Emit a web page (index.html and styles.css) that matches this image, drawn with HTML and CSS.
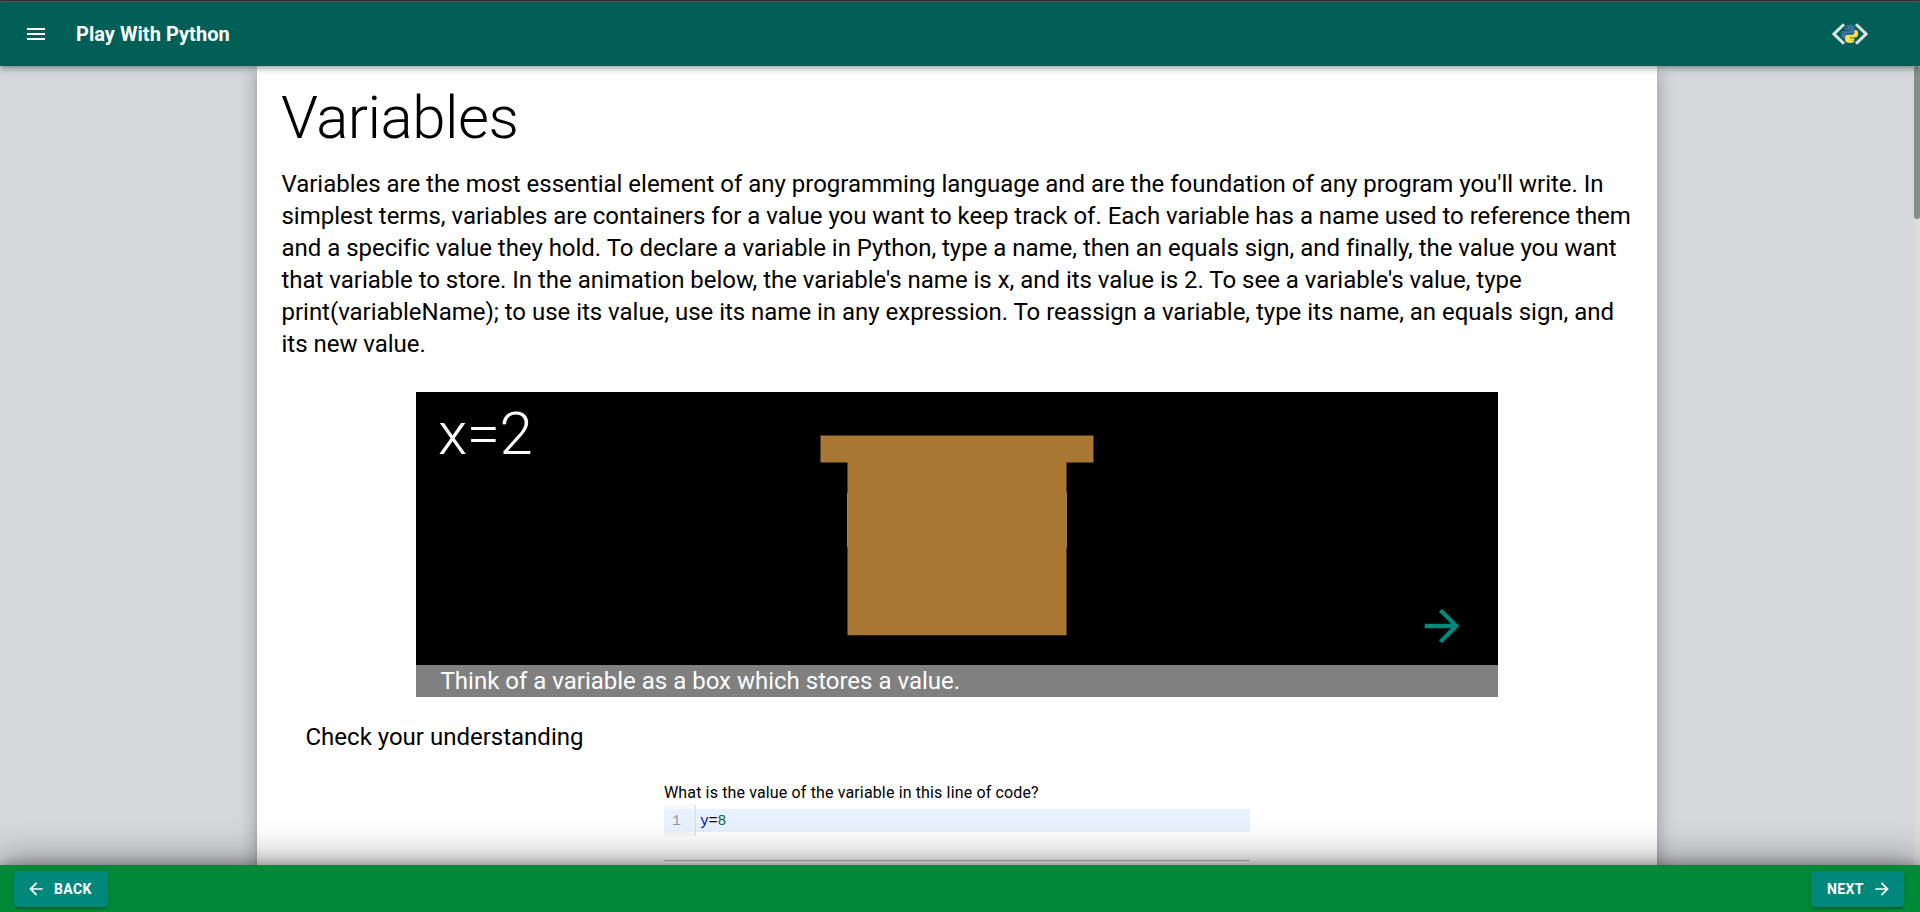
FILE: index.html
```html
<!DOCTYPE html>
<html lang="en">
<head>
<meta charset="utf-8">
<title>Play With Python</title>
<link rel="stylesheet" href="styles.css">
</head>
<body>
<div class="app">
  <header class="app-bar">
    <button class="menu" aria-label="Menu"><svg width="24" height="24" viewBox="0 0 24 24"><path fill="currentColor" d="M3 18h18v-2H3v2zm0-5h18v-2H3v2zm0-7v2h18V6H3z"/></svg></button>
    <span class="brand">Play With Python</span>
    <svg class="logo" width="36" height="22" viewBox="0 0 36 22">
      <path d="M12 1.2 2 11l10 9.800M24 1.200 34 11l-10 9.800" fill="none" stroke="#e2e2e2" stroke-width="3"/>
      <path fill="#3772a4" d="M17.500 2c-3.300 0-4.200 1.200-4.200 3v2h5v.8h-6.500c-2 0-2.800 1.700-2.800 3.700s.9 4 2.800 4h1.500v-2.300c0-1.700 1.300-2.700 2.900-2.700h4.200c1.400 0 2.400-.9 2.400-2.300V5c0-2-2-3-5.300-3z"/>
      <path fill="#ffdc4a" d="M18.100 20c3.300 0 4.200-1.200 4.200-3v-1.800h-4.500v-.8h5.700c1.800 0 2.700-1.700 2.700-3.700s-.8-3.700-2.600-3.700h-1.100v2.200c0 1.600-1.300 2.500-2.800 2.500h-4.200c-1.400 0-2.400.9-2.400 2.300V17c0 2 2 3 5 3z"/>
      <circle cx="15.500" cy="4.500" r=".8" fill="#005f56"/><circle cx="20" cy="17.300" r=".8" fill="#8d9a40"/>
    </svg>
  </header>
  <main class="content">
    <article class="paper">
      <h1 class="title">Variables</h1>
      <p class="text">Variables are the most essential element of any programming language and are the foundation of any program you'll write. In simplest terms, variables are containers for a value you want to keep track of. Each variable has a name used to reference them and a specific value they hold. To declare a variable in Python, type a name, then an equals sign, and finally, the value you want that variable to store. In the animation below, the variable's name is x, and its value is 2. To see a variable's value, type print(variableName); to use its value, use its name in any expression. To reassign a variable, type its name, an equals sign, and its new value.</p>
      <section class="animation">
        <div class="stage">
          <div class="code">x=2</div>
          <svg class="box" width="274" height="201" viewBox="0 0 274 201"><path fill="#a87734" d="M.5.500h273v27h-27v172.700H27.500V27.500H.5z"/><path fill="#a88550" d="M27 58h1v54h-1zM246 58h1v54h-1z"/></svg>
          <svg class="forward" width="52" height="52" viewBox="0 0 24 24"><path fill="#00897b" d="m12 4-1.410 1.410L16.170 11H4v2h12.170l-5.580 5.590L12 20l8-8z"/></svg>
        </div>
        <div class="caption">Think of a variable as a box which stores a value.</div>
      </section>
      <h2 class="check">Check your understanding</h2>
      <section class="quiz">
        <p class="question">What is the value of the variable in this line of code?</p>
        <div class="editor">
          <div class="gutter"><span class="line-no">1</span></div>
          <div class="line"><span class="var">y</span>=<span class="num">8</span></div>
        </div>
        <div class="rule"></div>
      </section>
    </article>
    <div class="track"><div class="thumb"></div></div>
  </main>
  <footer class="nav-bar">
    <button class="btn btn-back"><svg width="20" height="20" viewBox="0 0 24 24"><path fill="currentColor" d="M20 11H7.830l5.590-5.590L12 4l-8 8 8 8 1.410-1.410L7.830 13H20v-2z"/></svg>BACK</button>
    <button class="btn btn-next">NEXT<svg width="20" height="20" viewBox="0 0 24 24"><path fill="currentColor" d="m12 4-1.410 1.410L16.170 11H4v2h12.170l-5.580 5.590L12 20l8-8z"/></svg></button>
  </footer>
</div>
</body>
</html>
```
FILE: styles.css
```css
* { box-sizing: border-box; }
body { margin: 0; font-family: Roboto, "Liberation Sans", sans-serif; color: #000; overflow: hidden; }
h1, h2, p { margin: 0; }
button { border: 0; font: inherit; color: #fff; background: none; }
svg { display: block; flex: none; }
.app { height: 912px; display: flex; flex-direction: column; border-top: 1px solid #333036; background: #d6d7db; }
.app-bar { z-index: 2; flex: none; height: 65px; border-top: 1px solid #55575a; padding: 0 52px 0 24px; display: flex; align-items: center; background: #005f56; color: #fff; box-shadow: 0 2px 4px -1px rgba(0,0,0,.2), 0 4px 5px rgba(0,0,0,.14), 0 1px 10px rgba(0,0,0,.12); }
.menu { padding: 0; }
.brand { margin-left: 28px; font-size: 20px; font-weight: 700; line-height: 32px; letter-spacing: .04px; }
.logo { margin-left: auto; }
.content { flex: 1; min-height: 0; display: flex; justify-content: space-between; overflow: hidden; }
.paper { width: 1400px; height: 900px; margin-left: 257px; padding: 16px 24px; background: #fff; box-shadow: 0 6px 6px -3px rgba(0,0,0,.2), 0 10px 14px 1px rgba(0,0,0,.14), 0 4px 18px 3px rgba(0,0,0,.12); }
.title { font-size: 60px; font-weight: 300; line-height: 72px; letter-spacing: -.5px; }
.text { margin-top: 14px; padding-left: .5px; font-size: 24px; line-height: 32px; letter-spacing: -.02px; }
.animation { width: 1082px; margin: 32px 0 0 135px; }
.stage { height: 273px; padding: 6px 30px 0 22px; display: grid; grid-template-columns: 382px 274px 1fr; background: #000; }
.code { color: #fff; font-size: 60px; font-weight: 300; line-height: 72px; letter-spacing: -.5px; }
.box { margin-top: 37px; }
.forward { justify-self: end; align-self: end; margin-bottom: 13px; }
.caption { height: 32px; padding-left: 24.5px; background: #808080; color: #fff; font-size: 24px; line-height: 32px; }
.check { margin: 24px 0 0 24.5px; font-size: 24px; font-weight: 400; line-height: 32px; }
.quiz { width: 586px; margin: 28px 0 0 383px; }
.question { height: 24px; font-size: 16px; line-height: 24px; letter-spacing: .14px; }
.editor { height: 31px; display: flex; align-items: stretch; font: 14.67px/25px "Liberation Mono", monospace; }
.gutter { width: 32px; padding: 4px 0; background: #f7f7f7; border-right: 1px solid #ddd; }
.line-no { display: block; height: 23px; padding-left: 8px; background: #e8f2ff; color: #999; }
.line { flex: 1; height: 23px; margin: 4px 0; padding-left: 4px; background: #e8f2ff; }
.var { color: #00c; }
.num { color: #164; }
.rule { margin-top: 24px; height: 1px; background: #bbb; }
.track { width: 6px; background: #dcdcdc; }
.thumb { height: 153px; border-radius: 3px; background: #868e8a; }
.nav-bar { z-index: 2; flex: none; height: 47px; padding: 6px 16px 0 14px; display: flex; justify-content: space-between; align-items: flex-start; background: #008a37; box-shadow: 0 0 38px 3px rgba(0,0,0,.42), 0 0 12px rgba(0,0,0,.3); }
.btn { display: flex; align-items: center; gap: 8px; width: 94px; height: 36px; padding: 0; border-radius: 4px; background: #00897b; font-size: 14px; font-weight: 700; letter-spacing: .4px; box-shadow: 0 3px 1px -2px rgba(0,0,0,.2), 0 2px 2px rgba(0,0,0,.14), 0 1px 5px rgba(0,0,0,.12); }
.btn-back { padding-left: 12px; }
.btn-next { width: 93px; padding-left: 16px; }
```
